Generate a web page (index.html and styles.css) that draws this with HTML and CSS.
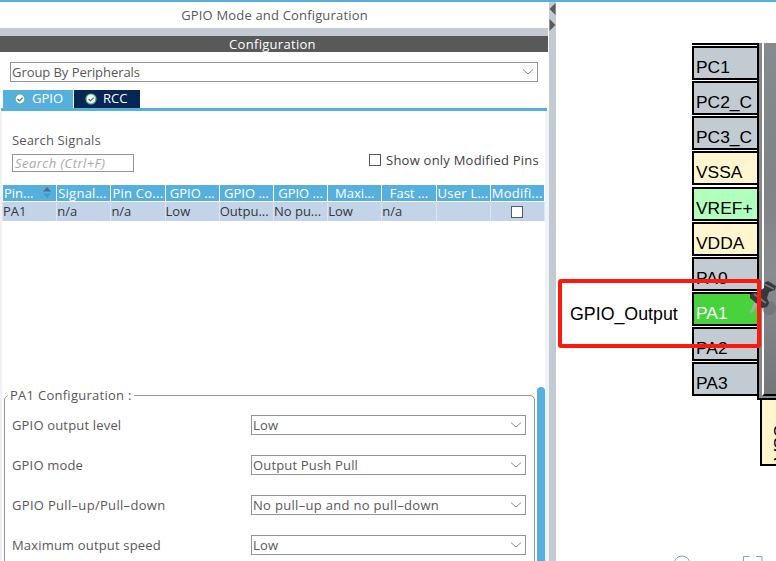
FILE: index.html
```
<!DOCTYPE html>
<html lang="en"><head><meta charset="utf-8"><title>GPIO Mode and Configuration</title>
<link rel="stylesheet" href="styles.css"></head>
<body>
<div class="app">
  <section class="panel">
    <h1 class="title">GPIO Mode and Configuration</h1>
    <h2 class="subtitle">Configuration</h2>
    <div class="select group"><span>Group By Peripherals</span><svg class="chev" viewBox="0 0 12 8"><path d="M1 1.5l5 4.5 5-4.5"/></svg></div>
    <nav class="tabs">
      <div class="tab active"><svg class="check" viewBox="0 0 12 12"><circle cx="6" cy="6" r="5"/><path d="M3.5 6l2 2 3.2-3.3"/></svg><span>GPIO</span></div>
      <div class="tab"><svg class="check" viewBox="0 0 12 12"><circle cx="6" cy="6" r="5"/><path d="M3.5 6l2 2 3.2-3.3"/></svg><span>RCC</span></div>
    </nav>
    <div class="content">
      <div class="search-row">
        <div class="search"><label>Search Signals</label><div class="search-box">Search (Ctrl+F)</div></div>
        <div class="modified"><i class="box"></i><span>Show only Modified Pins</span></div>
      </div>
      <div class="table">
        <div class="row head"><div class="left">Pin...<svg class="sort" viewBox="0 0 8 11"><path class="up" d="M0 4.5L4 0l4 4.5z"/><path class="down" d="M0 6.5h8L4 11z"/></svg></div><div class="tight">Signal...</div><div class="tight">Pin Co...</div><div>GPIO ...</div><div>GPIO ...</div><div>GPIO ...</div><div>Maxi...</div><div>Fast ...</div><div class="tight">User L...</div><div class="tight">Modifi...</div></div>
        <div class="row data"><div>PA1</div><div>n/a</div><div>n/a</div><div>Low</div><div>Outpu...</div><div>No pu...</div><div>Low</div><div>n/a</div><div></div><div class="mid"><i class="box"></i></div></div>
      </div>
      <div class="config-area">
        <fieldset class="config">
          <legend>PA1 Configuration :</legend>
          <div class="field"><span>GPIO output level</span><div class="select"><span>Low</span><svg class="chev" viewBox="0 0 12 8"><path d="M1 1.5l5 4.5 5-4.5"/></svg></div></div>
          <div class="field"><span>GPIO mode</span><div class="select"><span>Output Push Pull</span><svg class="chev" viewBox="0 0 12 8"><path d="M1 1.5l5 4.5 5-4.5"/></svg></div></div>
          <div class="field wide"><span>GPIO Pull–up/Pull–down</span><div class="select"><span>No pull–up and no pull–down</span><svg class="chev" viewBox="0 0 12 8"><path d="M1 1.5l5 4.5 5-4.5"/></svg></div></div>
          <div class="field"><span>Maximum output speed</span><div class="select"><span>Low</span><svg class="chev" viewBox="0 0 12 8"><path d="M1 1.5l5 4.5 5-4.5"/></svg></div></div>
        </fieldset>
        <div class="scroll"></div>
      </div>
    </div>
  </section>
  <div class="splitter"><svg viewBox="0 0 7 30"><path d="M6.5 1v12L.5 7zM.5 17v12l6-6z"/></svg></div>
  <section class="canvas">
    <div class="pins">
      <div class="pin stub"></div>
      <div class="pin">PC1</div><div class="pin">PC2_C</div><div class="pin">PC3_C</div>
      <div class="pin power">VSSA</div><div class="pin vref">VREF+</div><div class="pin power">VDDA</div>
      <div class="pin">PA0</div><div class="pin used">PA1</div><div class="pin">PA2</div><div class="pin">PA3</div>
    </div>
    <div class="chip"><div class="die"></div></div>
    <div class="bottom-pin"><span>VSS</span></div>
    <div class="signal">GPIO_Output</div>
    <svg class="tack" viewBox="0 0 27 36"><ellipse cx="20" cy="27" rx="7" ry="7" fill="#65696b" opacity=".5"/><path d="M5 22L1 31l2 1 8-10z" fill="#a9ada8"/><path d="M1 13l8-2 6-4 0-5 4-2 8 5-1 4-6 2-2 6 2 5-2 4-5 1-6-5-6-5z" fill="#36383a"/><path d="M15 3l10 5M5 13l12 9" stroke="#77797a" stroke-width="1.8"/></svg>
    <div class="highlight"></div>
    <svg class="tools" viewBox="0 0 92 12"><circle cx="8" cy="9" r="8"/><path d="M69.500 12V1.500h6M82 1.500h6V12"/></svg>
  </section>
</div>
</body></html>
```
FILE: styles.css
```
* { box-sizing: border-box; }
body { margin: 0; background: #fff; overflow: hidden; }
.app { display: flex; width: 776px; height: 561px; border-top: 2px solid #55b0e0; font: 13px/16px "Open Sans", "Noto Sans", sans-serif; color: #58585a; white-space: nowrap; overflow: hidden; }
.panel { width: 549px; display: flex; flex-direction: column; }
h1, h2 { margin: 0; font-size: 13px; font-weight: 400; text-align: center; }
.title { height: 26px; line-height: 26px; letter-spacing: .17px; }
.subtitle { width: 548px; height: 24px; border-top: 8px solid #c2cad2; background: #585a59; color: #fff; line-height: 16px; font-weight: 500; padding-right: 3px; letter-spacing: .3px; }
.select { display: flex; align-items: center; justify-content: space-between; width: 275px; height: 20px; border: 1px solid #929496; padding: 0 4px 0 1px; }
.group { width: 528px; margin: 10px 0 0 10px; }
.group span { letter-spacing: -.06px; }
.group .chev { margin-right: -1px; }
.chev { width: 12px; height: 8px; fill: none; stroke: #858789; stroke-width: 1; margin-right: -1px; }
.tabs { display: flex; gap: 1px; margin: 8px 2px 0 1px; padding-left: 2px; border-bottom: 3px solid #55b0e0; height: 21px; }
.tab { display: flex; align-items: center; gap: 6px; width: 66px; height: 18px; padding-left: 11px; color: #fff; background: #062656; line-height: 15px; }
.tab span { margin-top: -2px; }
.tab.active { width: 70px; background: #55b0e0; }
.check { width: 12px; height: 12px; margin-top: -1px; fill: #fff; stroke: #56b67e; stroke-width: 1.2; }
.check path { fill: none; stroke: #39796a; }
.content { flex: 1; border-left: 2px solid #f1f1f4; border-right: 4px solid #eff2f6; min-height: 0; }
.search-row { display: flex; justify-content: space-between; align-items: flex-end; height: 61px; padding: 0 6px 0 10px; }
.search-box { width: 122px; height: 18px; margin-top: 6px; border: 1px solid #929496; padding-left: 2px; font-style: italic; line-height: 17px; color: #aaa; letter-spacing: .45px; }
.search label { display: block; height: 16px; letter-spacing: .15px; }
.modified { display: flex; align-items: center; gap: 5px; height: 23px; color: #3e4042; margin-bottom: 1px; letter-spacing: .23px; }
.box { display: block; width: 12px; height: 12px; border: 1px solid #56585a; background: #fff; }
.table { margin: 13px 0 0 1px; width: 542px; }
.row { display: grid; grid-template-columns: repeat(10, 53.2px); gap: 1px; height: 17px; }
.row > div { overflow: hidden; }
.head { color: #fff; text-align: center; padding-bottom: 1px; }
.head > div { background: #55b0e0; line-height: 17px; }
.head .left { display: flex; justify-content: space-between; padding: 0 5px 0 1px; }
.head .tight { text-align: left; padding-left: 1px; letter-spacing: .25px; }
.sort { width: 8px; height: 11px; margin-top: 2px; }
.up { fill: #586a76; } .down { fill: #4999c2; }
.data { height: 19px; color: #34373b; margin-left: -1px; padding-left: 1px; background: #dce5f1; }
.data > div { background: #c3d4e9; line-height: 19px; }
.data .mid { display: flex; justify-content: center; align-items: center; }
.config-area { display: flex; height: 174px; margin-top: 166px; gap: 2px; }
.config { width: 531px; height: 190px; margin: 0 0 0 2px; padding: 12px 8px 0 7px; border: 1px solid #929496; border-radius: 5px; flex: none; }
.config legend { padding: 0 2px; margin-left: -4px; height: 16px; letter-spacing: .27px; }
.field { display: flex; justify-content: space-between; align-items: center; height: 20px; margin-bottom: 20px; letter-spacing: .17px; }
.field.wide { letter-spacing: .31px; }
.scroll { width: 8px; flex: none; background: #55b0e0; border-radius: 4px 4px 0 0; }
.splitter { width: 7px; background: #c2cad2; flex: none; }
.splitter svg { display: block; width: 7px; height: 30px; fill: #5a5b5d; }
.canvas { position: relative; width: 220px; font: 17.8px/20px "Liberation Sans", sans-serif; color: #000; overflow: hidden; }
.pins { display: flex; flex-direction: column; gap: 1.2px; width: 67px; margin: 41px 0 0 136px; }
.pin { height: 34px; border: 2px solid #000; background: #c2cad2; padding: 9px 0 0 2px; line-height: 20px; flex: none; font-size: 17.4px; }
.pin.stub { height: 2px; padding: 0; border-bottom: 0; margin-bottom: -.4px; }
.pin.power { background: #fff6d0; } .pin.vref { background: #b0ffbd; } .pin.used { background: #48d33c; color: #fff; }
.chip { position: absolute; left: 201px; top: 41px; width: 30px; height: 357px; border-left: 2px solid #000; border-bottom: 2px solid #000; background: #85878b; }
.die { width: 26px; height: 353px; margin-left: 3px; border-left: 2px solid #fff; border-bottom: 2px solid #000; background: linear-gradient(#858b90, #7f8386 40%, #8a8b8e 65%, #747679); }
.bottom-pin { position: absolute; left: 204px; top: 398px; width: 36px; height: 66px; border: 2px solid #000; border-top: 0; background: #fff6d0; }
.bottom-pin span { writing-mode: vertical-rl; transform: rotate(180deg); position: absolute; left: 9px; bottom: 3px; }
.signal { position: absolute; left: 14px; top: 302px; }
.tack { position: absolute; left: 193px; top: 279px; width: 27px; height: 36px; }
.highlight { position: absolute; left: 2px; top: 277px; width: 203px; height: 69px; border: 4px solid #ff190c; border-radius: 3px; }
.tools { position: absolute; left: 118px; top: 553px; width: 92px; height: 12px; fill: none; stroke: #65add4; }
```
